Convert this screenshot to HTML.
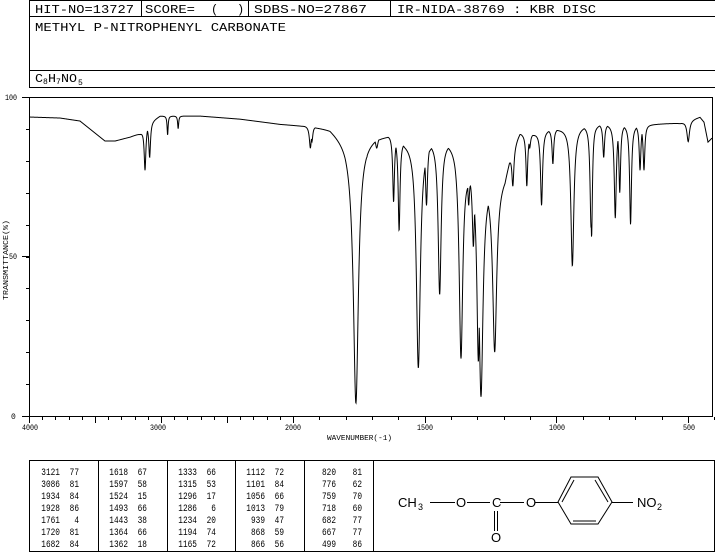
<!DOCTYPE html>
<html><head><meta charset="utf-8"><style>
html,body{margin:0;padding:0;background:#fff;}
svg{display:block;}
text{font-family:"Liberation Mono","DejaVu Sans Mono",monospace;fill:#000;}
.sf{font-family:"Liberation Sans",sans-serif;}
</style></head><body>
<svg id="s" width="715" height="553" viewBox="0 0 715 553" xmlns="http://www.w3.org/2000/svg">
<g fill="none" stroke="#000" stroke-width="1">
<rect x="29.5" y="0.5" width="686" height="87"/>
<line x1="29" y1="16.5" x2="715" y2="16.5"/>
<line x1="29" y1="70.5" x2="715" y2="70.5"/>
<line x1="141.5" y1="0" x2="141.5" y2="16"/>
<line x1="248.5" y1="0" x2="248.5" y2="16"/>
<line x1="390.5" y1="0" x2="390.5" y2="16"/>
<rect x="29.5" y="97.5" width="683" height="319"/>
<line x1="22" y1="97.5" x2="29" y2="97.5"/>
<line x1="22" y1="256.5" x2="29" y2="256.5"/>
<line x1="22" y1="416.5" x2="29" y2="416.5"/>
<rect x="29.5" y="460.5" width="685" height="91"/>
<line x1="98.5" y1="460" x2="98.5" y2="552"/>
<line x1="167.5" y1="460" x2="167.5" y2="552"/>
<line x1="235.5" y1="460" x2="235.5" y2="552"/>
<line x1="304.5" y1="460" x2="304.5" y2="552"/>
<line x1="373.5" y1="460" x2="373.5" y2="552"/>
</g>
<g font-size="12">
<text x="35" y="13" textLength="99" lengthAdjust="spacingAndGlyphs">HIT-NO=13727</text>
<text x="145" y="13" textLength="50" lengthAdjust="spacingAndGlyphs">SCORE=</text>
<text x="211" y="13">(</text><text x="237" y="13">)</text>
<text x="254" y="13" textLength="113" lengthAdjust="spacingAndGlyphs">SDBS-NO=27867</text>
<text x="397" y="13" textLength="199" lengthAdjust="spacingAndGlyphs">IR-NIDA-38769 : KBR DISC</text>
<text x="35" y="31" textLength="251" lengthAdjust="spacingAndGlyphs">METHYL P-NITROPHENYL CARBONATE</text>
<text x="35" y="82" textLength="8" lengthAdjust="spacingAndGlyphs">C</text>
<text x="43" y="84" font-size="8">8</text>
<text x="48" y="82" textLength="8" lengthAdjust="spacingAndGlyphs">H</text>
<text x="56" y="84" font-size="8">7</text>
<text x="61" y="82" textLength="16" lengthAdjust="spacingAndGlyphs">NO</text>
<text x="78" y="85" font-size="8">5</text>
</g>
<g font-size="8">
<text x="5" y="100" textLength="12" lengthAdjust="spacingAndGlyphs">100</text>
<text x="9" y="259" textLength="8" lengthAdjust="spacingAndGlyphs">50</text>
<text x="11" y="419">0</text>
<text x="22" y="430" textLength="16" lengthAdjust="spacingAndGlyphs">4000</text>
<text x="150" y="430" textLength="16" lengthAdjust="spacingAndGlyphs">3000</text>
<text x="285" y="430" textLength="16" lengthAdjust="spacingAndGlyphs">2000</text>
<text x="417" y="430" textLength="16" lengthAdjust="spacingAndGlyphs">1500</text>
<text x="549" y="430" textLength="16" lengthAdjust="spacingAndGlyphs">1000</text>
<text x="683" y="430" textLength="12" lengthAdjust="spacingAndGlyphs">500</text>
<text x="327" y="440" font-size="7" textLength="65" lengthAdjust="spacingAndGlyphs">WAVENUMBER(-1)</text>
<text transform="translate(8,300) rotate(-90)" font-size="7" textLength="80" lengthAdjust="spacingAndGlyphs">TRANSMITTANCE(%)</text>
</g>
<g id="tbl" font-size="10"></g>
<g id="ticks" stroke="#000" stroke-width="1"></g>
<path id="spec" fill="none" stroke="#000" stroke-width="1" d=""/>
<g stroke="#000" stroke-width="1" fill="none">
<line x1="430" y1="502.5" x2="455" y2="502.5"/>
<line x1="467" y1="502.5" x2="490" y2="502.5"/>
<line x1="500" y1="502.5" x2="524" y2="502.5"/>
<line x1="535" y1="502.5" x2="558" y2="502.5"/>
<line x1="494.5" y1="511" x2="494.5" y2="531"/>
<line x1="497.5" y1="511" x2="497.5" y2="531"/>
<polygon points="558,502 571,477 598,477 612,502 598,524 571,524"/>
<line x1="574" y1="480" x2="562" y2="502"/>
<line x1="595" y1="480" x2="608" y2="502"/>
<line x1="573" y1="521" x2="596" y2="521"/>
<line x1="612" y1="502.5" x2="633" y2="502.5"/>
</g>
<g font-size="13">
<text class="sf" x="398" y="507">CH</text>
<text class="sf" x="418" y="510" font-size="9">3</text>
<text class="sf" x="456" y="507">O</text>
<text class="sf" x="492" y="507">C</text>
<text class="sf" x="526" y="507">O</text>
<text class="sf" x="491" y="542">O</text>
<text class="sf" x="637" y="507">NO</text>
<text class="sf" x="657" y="510" font-size="9">2</text>
</g>
</svg>
<script>
(function(){
function wx(w){return w>2000?29+(4000-w)*0.132:293+(2000-w)*0.2633;}
var t=document.getElementById('ticks'),h='';
for(var w=4000;w>=400;w-=100){var x=Math.round(wx(w))+0.5;var L=(w%500==0)?6:3;h+='<line x1="'+x+'" y1="417" x2="'+x+'" y2="'+(417+L)+'"/>';}
for(var v=0;v<=100;v+=10){var y=Math.round(416-v*3.19)+0.5;h+='<line x1="26" y1="'+y+'" x2="29" y2="'+y+'"/>';}
t.innerHTML=h;
var cols=[["3121 77","3086 81","1934 84","1928 86","1761 4","1720 81","1682 84"],
["1618 67","1597 58","1524 15","1493 66","1443 38","1364 66","1362 18"],
["1333 66","1315 53","1296 17","1286 6","1234 20","1194 74","1165 72"],
["1112 72","1101 84","1056 66","1013 79","939 47","868 59","866 56"],
["820 81","776 62","759 70","718 60","682 77","667 77","499 86"]];
var cx=[30,98,167,235,304],s='';
for(var c=0;c<5;c++)for(var r=0;r<7;r++){var p=cols[c][r].split(' ');var y=475+r*12;
var a=cx[c]+(c==4?32:30),b=cx[c]+(c==4?58:49);
s+='<text x="'+a+'" y="'+y+'" text-anchor="end" transform="translate('+a+',0) scale(0.78,1) translate('+(-a)+',0)">'+p[0]+'</text>';
s+='<text x="'+b+'" y="'+y+'" text-anchor="end" transform="translate('+b+',0) scale(0.78,1) translate('+(-b)+',0)">'+p[1]+'</text>';}
document.getElementById('tbl').innerHTML=s;
var B=[[29,117],[60,118],[80,121],[95,133],[105,141],[115,141],[130,137],[140,133],[150,122],[160,116],[200,116],[240,119],[280,124],[310,126],[330,128],[345,140],[352,150],[360,141],[375,136],[390,135],[405,141],[420,142],[440,141],[455,143],[462,150],[470,175],[480,185],[495,185],[505,175],[512,150],[520,133],[530,135],[545,130],[570,127],[600,124],[640,125],[680,123],[700,117],[704,122],[708,142],[712,138]];
function base(x){for(var i=0;i<B.length-1;i++){if(x<=B[i+1][0]){var f=(x-B[i][0])/(B[i+1][0]-B[i][0]);return B[i][1]+f*(B[i+1][1]-B[i][1]);}}return B[B.length-1][1];}
var P=[[3121,77,1],[3086,81,1],[2950,88,0.6],[2870,90,0.6],[1934,84,1.2],[1928,86,1],[1761,4,3],[1720,81,1.5],[1682,84,1.5],[1618,67,1],[1597,58,1.1],[1524,15,2.4],[1493,66,1.2],[1443,38,1.8],[1364,66,1],[1362,18,2.2],[1333,66,1],[1315,53,1.2],[1296,17,1.8],[1286,6,2.4],[1234,20,2.4],[1194,74,1.2],[1165,72,1.2],[1112,72,1],[1101,84,1],[1056,66,1.2],[1013,79,1],[939,47,1.8],[868,59,1.2],[866,56,1],[820,81,1],[776,62,1.2],[759,70,1],[718,60,1.1],[682,77,1],[667,77,1],[499,86,1.5]];
var d='';
for(var x=29.5;x<=712;x+=0.25){var b=base(x),m=0;
for(var i=0;i<P.length;i++){var px=wx(P[i][0]),py=416-P[i][1]*3.19,g=P[i][2];var dep=py-base(px);if(dep<0)dep=0;var dx=x-px;var v=dep*g*g/(dx*dx+g*g);if(v>m)m=v;}
var y=Math.min(416,b+m);d+=(d?'L':'M')+x.toFixed(2)+' '+y.toFixed(2);}
document.getElementById('spec').setAttribute('d',d);
})();
</script>
</body></html>
